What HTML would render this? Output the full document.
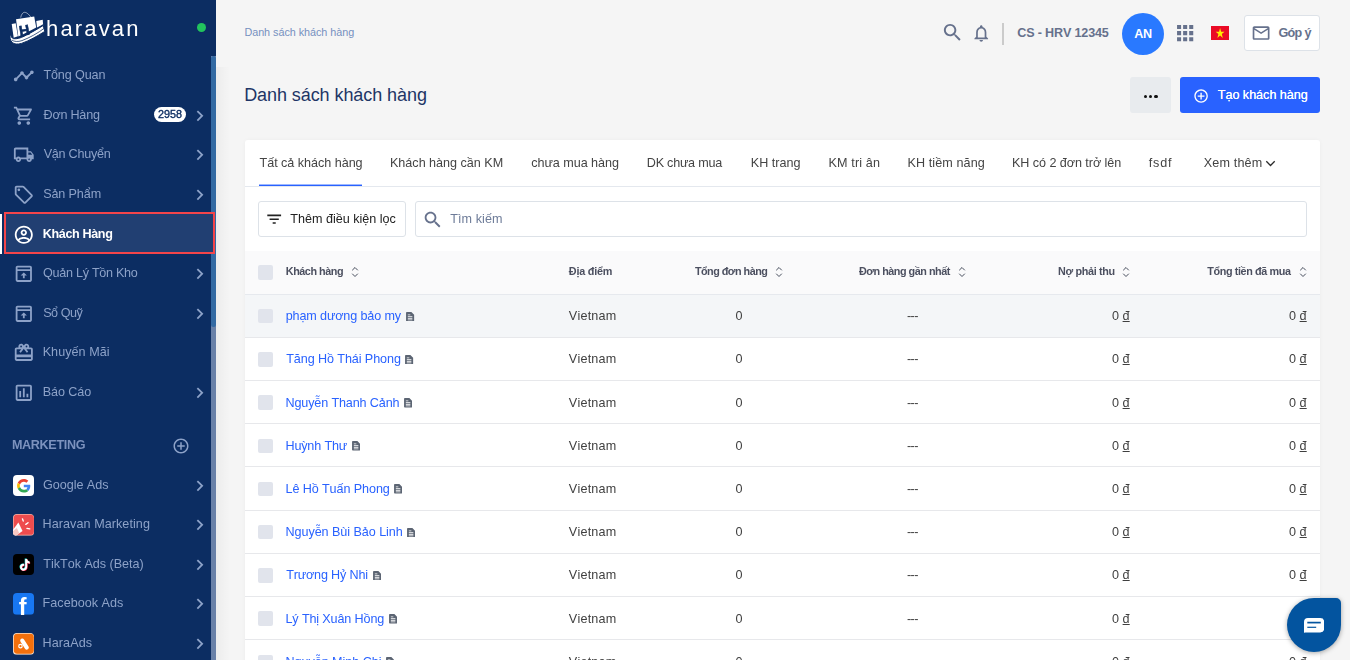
<!DOCTYPE html>
<html lang="vi">
<head>
<meta charset="utf-8">
<title>Danh sách khách hàng</title>
<style>
*{box-sizing:border-box;margin:0;padding:0}
html,body{width:1350px;height:660px;overflow:hidden;background:#f5f5f5;font-family:"Liberation Sans",sans-serif;color:#212121;font-size:12.6px;font-kerning:none}
body{position:relative}
.tx{white-space:nowrap;position:relative}
/* sidebar */
#side{position:absolute;left:0;top:0;width:216px;height:660px;background:#0c2d62;overflow:hidden;will-change:transform}
#side .track{position:absolute;left:211px;top:56px;width:5px;height:604px;background:#6981a8}
#side .thumb{position:absolute;left:211px;top:56px;width:5px;height:270.6px;background:#336aa3;border-radius:2.5px}
.mi{position:absolute;left:0;width:211px;height:39.6px;color:#8da2c8;font-size:12.6px;line-height:39.6px;white-space:nowrap}
.mi > .tx{position:absolute;left:43.6px;top:0}
.mi svg.ic{position:absolute;left:12.6px;top:9px;width:21.6px;height:21.6px;fill:#8da2c8}
.mi svg.ch{position:absolute;left:189.2px;top:9px;width:21.6px;height:21.6px;fill:#8da2c8}
.mi.act{color:#fff;font-weight:bold}
.mi.act svg.ic{fill:#fff}
#actbox{position:absolute;left:4px;top:211.9px;width:210.8px;height:42px;background:#213f72;border:2.9px solid #f4454a}
#actbar{position:absolute;left:0;top:213.9px;width:2px;height:40px;background:#fff}
.badge{position:absolute;left:153.8px;top:11.1px;width:32.4px;height:15.3px;border-radius:7.65px;background:#fff;color:#0c2d62;font-size:10.8px;font-weight:normal;-webkit-text-stroke:.35px #0c2d62;line-height:15.3px;text-align:center}
.app{position:absolute;left:12.8px;top:9px;width:21.6px;height:21.6px;border-radius:4px;overflow:hidden}
.app svg{display:block;width:21.6px;height:21.6px}
#mk{position:absolute;left:12.8px;top:435px;font-size:12.6px;line-height:20px;font-weight:bold;color:#7c92be}
#mkplus{position:absolute;left:171.5px;top:436.5px;width:18px;height:18px;fill:#8da2c8}
#logo{position:absolute;left:6px;top:8px;width:44px;height:40px}
#brand{position:absolute;left:46px;top:14px;font-size:22px;line-height:30px;color:#fff}
#dot{position:absolute;left:197px;top:22.8px;width:9.2px;height:9.2px;border-radius:50%;background:#22c35d}
/* top */
#sh{position:absolute;left:216px;top:66.6px;width:14px;height:594px;background:linear-gradient(to right,rgba(0,0,0,.035),rgba(0,0,0,0))}
#crumb{position:absolute;left:245px;top:22px;font-size:10.8px;color:#7590c0;line-height:20px}
#title{position:absolute;left:245px;top:80px;font-size:18px;color:#1e3566;line-height:30px}
.tb{position:absolute;fill:#66718c}
#sep{position:absolute;left:1002px;top:23px;width:2px;height:22px;background:#cbcbcb}
#shop{position:absolute;left:1017.8px;top:23px;font-size:12.6px;font-weight:bold;color:#66718c;line-height:20px}
#av{position:absolute;left:1122px;top:12.5px;width:42px;height:42px;border-radius:50%;background:#2979ff;color:#fff;font-weight:bold;font-size:12.6px;line-height:43px;text-align:center}
#flag{position:absolute;left:1210.8px;top:25.8px;width:18.2px;height:14.2px}
#gopy{position:absolute;left:1243.5px;top:15.2px;width:76px;height:35.4px;background:#fff;border:1px solid #dde2e8;border-radius:3px}
#gopy svg{position:absolute;left:6.3px;top:6.5px;width:20.2px;height:20.2px;fill:#66718c}
#gopy .tx{position:absolute;left:35px;top:0;line-height:35px;font-weight:bold;color:#66718c}
#more{position:absolute;left:1130px;top:77px;width:41px;height:35.8px;background:#e8ebee;border-radius:3px}
#more i{position:absolute;top:17.5px;width:3.2px;height:3.2px;border-radius:50%;background:#111}
#create{position:absolute;left:1180px;top:77px;width:140px;height:35.8px;background:#2962ff;border-radius:3px;color:#fff}
#create svg{position:absolute;left:13.4px;top:10.9px;width:16.2px;height:16.2px;fill:#fff}
#create .tx{position:absolute;left:38px;top:0;line-height:37.8px;text-shadow:0 0 .3px #fff}
/* card */
#card{position:absolute;left:245px;top:140px;width:1075px;height:540px;background:#fff;border-radius:3px;box-shadow:0 0 4px rgba(0,0,0,.04);will-change:transform}
#tabs{position:absolute;left:0;top:0;width:1075px;height:46.8px;border-bottom:1px solid #e4e8ee}
.tab{position:absolute;top:13px;line-height:20px;color:#444;font-size:12.6px}
#ul{position:absolute;left:14px;top:45px;width:103px;height:1px;background:#2962ff;box-shadow:0 -1px 0 rgba(41,98,255,.45)}
#fbtn{position:absolute;left:13px;top:61.2px;width:147.6px;height:35.4px;border:1px solid #dde2e8;border-radius:3px;background:#fff}
#fbtn svg{position:absolute;left:6px;top:7.7px;width:18.4px;height:18.4px;fill:#222}
#fbtn .tx{position:absolute;left:31.6px;top:0;line-height:35px;color:#222}
#sbox{position:absolute;left:170px;top:61.2px;width:892px;height:35.4px;border:1px solid #dde2e8;border-radius:3px;background:#fff}
#sbox svg{position:absolute;left:6.4px;top:7px;width:21.6px;height:21.6px;fill:#66718c}
#sbox .tx{position:absolute;left:34.6px;top:0;line-height:35px;color:#6d7b98}
#th{position:absolute;left:0;top:111.35px;width:1075px;height:43.2px;background:#fafafb;border-bottom:1px solid #e6e9ee;font-size:10.8px;font-weight:bold;color:#4c5060;line-height:40.6px}
.row{position:absolute;left:0;width:1075px;height:43.2px;border-bottom:1px solid #e7e8eb;line-height:43.8px;color:#3f3f3f;font-size:12.6px}
.row.hv{background:#f4f6f8}
.cb{position:absolute;left:13.3px;width:14.6px;height:14.4px;background:#e1e4ec;border-radius:2px}
.c{position:absolute;top:0;white-space:nowrap}
.row .c{top:.7px}
.nm{color:#2962ff}
.srt{position:absolute;width:8px;height:12px}
.doc{position:absolute;width:8.2px;height:9.6px;fill:#5c6573}
.u{text-decoration:underline}
#chat{position:absolute;left:1287px;top:597.6px;width:54px;height:54.6px;background:#03549f;border-radius:27px 5px 27px 27px;box-shadow:0 1px 5px rgba(0,0,0,.35)}
</style>
</head>
<body>

<div id="side">
<div class="track"></div><div class="thumb"></div>
<div id="actbox"></div><div id="actbar"></div>
<svg id="logo" viewBox="6 8 44 40">
<g fill="#fff">
<path d="M11.700 24 L15.700 23.200 L17.900 36.300 L13.700 37.800 Z"/>
<path d="M16 19.300 L34.200 16.500 L36.200 27.600 C30 31 24 34.200 18.300 36.400 Z"/>
<path d="M36.300 21 L42.700 19.800 L43.100 24.300 C41 25.600 39 26.600 37 27.500 Z"/>
<path stroke="#0c2d62" stroke-width="1" d="M10.300 33.800 C10.700 36.400 11.700 38 13.500 38.700 C17 39.100 20.500 38 24 36.300 C31 32.800 37.500 29 43.200 25.500 L44.800 31.400 C37 36.300 29 40.800 21.500 43.400 C17.500 44.500 14.300 44.300 12.300 42.500 C10.200 40.500 9.500 37 10.300 33.800 Z"/>
</g>
<path d="M20.700 17.600 C21.300 14.500 22.800 12.300 24.600 12.300 C26.800 12.300 29.800 15 31.600 18.600" fill="none" stroke="#fff" stroke-width=".55"/>
<text x="19.900" y="36" transform="rotate(-10 21 36)" font-family="Liberation Sans, sans-serif" font-weight="bold" font-size="14.500" fill="#0c2d62" stroke="#0c2d62" stroke-width=".500">H</text>
<path d="M11.800 40 C14 41.700 18 42 22 40.600 C30 37.600 38 33 44.200 28.300" fill="none" stroke="#0c2d62" stroke-width=".75"/>
</svg>
<div id="brand"><span id="t1" class="tx " style="letter-spacing:2.150px;">haravan</span></div>
<div id="dot"></div>
<div class="mi " style="top:56.20px">
<svg class="ic" viewBox="0 0 24 24"><path d="M23 8c0 1.1-.9 2-2 2-.18 0-.35-.02-.51-.07l-3.56 3.55c.05.16.07.34.07.52 0 1.1-.9 2-2 2s-2-.9-2-2c0-.18.02-.36.07-.52l-2.55-2.55c-.16.05-.34.07-.52.07s-.36-.02-.52-.07l-4.55 4.56c.05.16.07.33.07.51 0 1.1-.9 2-2 2s-2-.9-2-2 .9-2 2-2c.18 0 .35.02.51.07l4.56-4.55C8.02 9.36 8 9.18 8 9c0-1.1.9-2 2-2s2 .9 2 2c0 .18-.02.36-.07.52l2.55 2.55c.16-.05.34-.07.52-.07s.36.02.52.07l3.55-3.56C19.02 8.35 19 8.18 19 8c0-1.1.9-2 2-2s2 .9 2 2z"/></svg>
<span id="t2" class="tx " style="letter-spacing:-0.128px;left:43.43px;">Tổng Quan</span>
</div>
<div class="mi " style="top:95.80px">
<svg class="ic" viewBox="0 0 24 24"><path d="M15.55 13c.75 0 1.41-.41 1.75-1.03l3.58-6.49c.37-.66-.11-1.48-.87-1.48H5.21l-.94-2H1v2h2l3.6 7.59-1.35 2.44C4.52 15.37 5.48 17 7 17h12v-2H7l1.1-2h7.45zM6.16 6h12.15l-2.76 5H8.53L6.16 6zM7 18c-1.1 0-1.99.9-1.99 2S5.9 22 7 22s2-.9 2-2-.9-2-2-2zm10 0c-1.1 0-1.99.9-1.99 2s.89 2 1.99 2 2-.9 2-2-.9-2-2-2z"/></svg>
<span id="t3" class="tx " style="letter-spacing:-0.239px;left:43.62px;">Đơn Hàng</span>
<div class="badge"><span id="t4" class="tx " style="letter-spacing:0.050px;">2958</span></div>
<svg class="ch" viewBox="0 0 24 24"><path d="M8.59 16.59L13.17 12 8.59 7.41 10 6l6 6-6 6-1.410-1.410z"/></svg>
</div>
<div class="mi " style="top:135.40px">
<svg class="ic" viewBox="0 0 24 24"><path d="M20 8h-3V4H3c-1.1 0-2 .9-2 2v11h2c0 1.66 1.34 3 3 3s3-1.34 3-3h6c0 1.66 1.34 3 3 3s3-1.34 3-3h2v-5l-3-4zm-.5 1.5l1.96 2.5H17V9.5h2.5zM6 18c-.55 0-1-.45-1-1s.45-1 1-1 1 .45 1 1-.45 1-1 1zm2.22-3c-.55-.61-1.33-1-2.22-1s-1.67.39-2.22 1H3V6h12v9H8.22zM18 18c-.55 0-1-.45-1-1s.45-1 1-1 1 .45 1 1-.45 1-1 1z"/></svg>
<span id="t5" class="tx " style="letter-spacing:-0.250px;left:43.65px;">Vận Chuyển</span>
<svg class="ch" viewBox="0 0 24 24"><path d="M8.59 16.59L13.17 12 8.59 7.41 10 6l6 6-6 6-1.410-1.410z"/></svg>
</div>
<div class="mi " style="top:175.00px">
<svg class="ic" viewBox="0 0 24 24"><path d="M21.41 11.58l-9-9C12.05 2.22 11.55 2 11 2H4c-1.1 0-2 .9-2 2v7c0 .55.22 1.05.59 1.42l9 9c.36.36.86.58 1.41.58s1.05-.22 1.41-.59l7-7c.37-.36.59-.86.59-1.41s-.23-1.06-.59-1.42zM13 20.01L4 11V4h7v-.01l9 9-7 7.02z"/><circle cx="6.5" cy="6.5" r="1.5"/></svg>
<span id="t6" class="tx " style="letter-spacing:-0.115px;left:43.13px;">Sản Phẩm</span>
<svg class="ch" viewBox="0 0 24 24"><path d="M8.59 16.59L13.17 12 8.59 7.41 10 6l6 6-6 6-1.410-1.410z"/></svg>
</div>
<div class="mi act" style="top:214.60px">
<svg class="ic" viewBox="0 0 24 24"><path d="M12 2C6.48 2 2 6.48 2 12s4.48 10 10 10 10-4.48 10-10S17.520 2 12 2zM7.070 18.280c.43-.9 3.050-1.780 4.930-1.780s4.510.88 4.930 1.780C15.570 19.360 13.860 20 12 20s-3.570-.64-4.930-1.720zm11.290-1.450c-1.430-1.740-4.900-2.330-6.360-2.330s-4.930.59-6.360 2.330C4.620 15.490 4 13.820 4 12c0-4.410 3.590-8 8-8s8 3.590 8 8c0 1.820-.62 3.490-1.640 4.830zM12 6c-1.940 0-3.500 1.560-3.500 3.500S10.060 13 12 13s3.500-1.560 3.500-3.500S13.940 6 12 6zm0 5c-.83 0-1.500-.67-1.500-1.500S11.170 8 12 8s1.500.67 1.500 1.500S12.830 11 12 11z"/></svg>
<span id="t7" class="tx " style="letter-spacing:-0.388px;left:42.86px;">Khách Hàng</span>
</div>
<div class="mi " style="top:254.20px">
<svg class="ic" viewBox="0 0 24 24"><path d="M19 3H5c-1.100 0-2 .9-2 2v14c0 1.100.9 2 2 2h14c1.100 0 2-.9 2-2V5c0-1.100-.9-2-2-2zm0 16H5V9h14v10zM5 7V5h14v2H5z"/><path d="M12 10.500l-3.500 3.500h2.500v3h2v-3h2.500z"/></svg>
<span id="t8" class="tx " style="letter-spacing:-0.286px;left:43.10px;">Quản Lý Tồn Kho</span>
<svg class="ch" viewBox="0 0 24 24"><path d="M8.59 16.59L13.17 12 8.59 7.41 10 6l6 6-6 6-1.410-1.410z"/></svg>
</div>
<div class="mi " style="top:293.80px">
<svg class="ic" viewBox="0 0 24 24"><path d="M19 3H5c-1.100 0-2 .9-2 2v14c0 1.100.9 2 2 2h14c1.100 0 2-.9 2-2V5c0-1.100-.9-2-2-2zm0 16H5V9h14v10zM5 7V5h14v2H5z"/><path d="M12 10.500l-3.500 3.500h2.500v3h2v-3h2.500z"/></svg>
<span id="t9" class="tx " style="letter-spacing:-0.441px;left:43.13px;">Sổ Quỹ</span>
<svg class="ch" viewBox="0 0 24 24"><path d="M8.59 16.59L13.17 12 8.59 7.41 10 6l6 6-6 6-1.410-1.410z"/></svg>
</div>
<div class="mi " style="top:333.40px">
<svg class="ic" viewBox="0 0 24 24"><path d="M20 6h-2.180c.11-.31.180-.65.180-1 0-1.660-1.340-3-3-3-1.050 0-1.960.54-2.500 1.350l-.5.670-.5-.68C10.960 2.540 10.050 2 9 2 7.340 2 6 3.340 6 5c0 .35.070.69.180 1H4c-1.110 0-1.990.89-1.990 2L2 19c0 1.110.89 2 2 2h16c1.110 0 2-.89 2-2V8c0-1.110-.89-2-2-2zm-5-2c.55 0 1 .45 1 1s-.45 1-1 1-1-.45-1-1 .45-1 1-1zM9 4c.55 0 1 .45 1 1s-.45 1-1 1-1-.45-1-1 .45-1 1-1zm11 15H4v-2h16v2zm0-5H4V8h5.080L7 10.830 8.620 12 11 8.760l1-1.360 1 1.360L15.380 12 17 10.830 14.920 8H20v6z"/></svg>
<span id="t10" class="tx " style="letter-spacing:0.041px;left:42.68px;">Khuyến Mãi</span>
</div>
<div class="mi " style="top:373.00px">
<svg class="ic" viewBox="0 0 24 24"><path d="M19 3H5c-1.100 0-2 .9-2 2v14c0 1.100.9 2 2 2h14c1.100 0 2-.9 2-2V5c0-1.100-.9-2-2-2zm0 16H5V5h14v14zM7 10h2v7H7zm4-3h2v10h-2zm4 6h2v4h-2z"/></svg>
<span id="t11" class="tx " style="letter-spacing:-0.076px;left:42.68px;">Báo Cáo</span>
<svg class="ch" viewBox="0 0 24 24"><path d="M8.59 16.59L13.17 12 8.59 7.41 10 6l6 6-6 6-1.410-1.410z"/></svg>
</div>
<div id="mk"><span id="t12" class="tx " style="letter-spacing:-0.342px;left:-0.85px;">MARKETING</span></div>
<svg id="mkplus" viewBox="0 0 24 24"><path d="M13 7h-2v4H7v2h4v4h2v-4h4v-2h-4V7zm-1-5C6.480 2 2 6.480 2 12s4.480 10 10 10 10-4.480 10-10S17.520 2 12 2zm0 18c-4.410 0-8-3.590-8-8s3.590-8 8-8 8 3.590 8 8-3.590 8-8 8z"/></svg>
<div class="mi" style="top:465.60px">
<div class="app"><svg viewBox="0 0 24 24"><rect width="24" height="24" fill="#fff"/><g transform="translate(4.5 4.5) scale(0.3125)"><path fill="#EA4335" d="M24 9.500c3.540 0 6.710 1.220 9.210 3.600l6.850-6.850C35.900 2.380 30.470 0 24 0 14.620 0 6.510 5.380 2.560 13.220l7.980 6.190C12.430 13.720 17.740 9.500 24 9.500z"/><path fill="#4285F4" d="M46.980 24.550c0-1.570-.15-3.090-.38-4.550H24v9.020h12.940c-.58 2.960-2.260 5.480-4.780 7.180l7.730 6c4.510-4.180 7.090-10.360 7.090-17.650z"/><path fill="#FBBC05" d="M10.530 28.590c-.48-1.450-.76-2.990-.76-4.590s.27-3.140.76-4.590l-7.980-6.190C.92 16.460 0 20.120 0 24c0 3.880.92 7.540 2.560 10.780l7.970-6.190z"/><path fill="#34A853" d="M24 48c6.480 0 11.930-2.130 15.890-5.810l-7.730-6c-2.150 1.450-4.920 2.300-8.160 2.300-6.260 0-11.570-4.220-13.470-9.910l-7.980 6.190C6.510 42.620 14.620 48 24 48z"/></g></svg></div>
<span id="t13" class="tx " style="letter-spacing:-0.036px;left:42.97px;">Google Ads</span>
<svg class="ch" viewBox="0 0 24 24"><path d="M8.59 16.59L13.17 12 8.59 7.41 10 6l6 6-6 6-1.410-1.410z"/></svg>
</div>
<div class="mi" style="top:505.20px">
<div class="app"><svg viewBox="0 0 24 24"><rect width="24" height="24" fill="#f7b3a6"/><rect x=".8" y=".8" width="22.400" height="22.400" rx="3.800" fill="#ee4c4e"/><path d="M0 17.500 L6 9.500 L10.600 19 L3.500 24 L0 24 Z" fill="#fff"/><path d="M0 19 L4.300 15.500 L7 21.500 L3.500 24 L0 24 Z" fill="#f9c9c4"/><path d="M10.500 5.400 L11.400 7.800 M14.200 11.500 L16.700 9.700 M15.500 16 L18.600 16.600" stroke="#fff" stroke-width="1.500" stroke-linecap="round"/></svg></div>
<span id="t14" class="tx " style="letter-spacing:0.059px;left:42.57px;">Haravan Marketing</span>
<svg class="ch" viewBox="0 0 24 24"><path d="M8.59 16.59L13.17 12 8.59 7.41 10 6l6 6-6 6-1.410-1.410z"/></svg>
</div>
<div class="mi" style="top:544.80px">
<div class="app"><svg viewBox="0 0 24 24"><rect width="24" height="24" fill="#000"/><path d="M13.700 5.500h2.100c.1 1.600 1.100 2.700 2.700 2.900v2.100c-1 0-1.900-.3-2.700-.8v4.600c0 2.400-1.800 4.200-4.100 4.200-2.200 0-3.900-1.700-3.900-3.800 0-2.300 2-4.100 4.500-3.700v2.200c-1.200-.3-2.300.4-2.300 1.500 0 .9.800 1.600 1.700 1.600 1.100 0 1.900-.7 1.900-2V5.500z" fill="#25f4ee" transform="translate(-.6 -.5)"/><path d="M13.700 5.500h2.100c.1 1.600 1.100 2.700 2.700 2.900v2.100c-1 0-1.900-.3-2.700-.8v4.600c0 2.400-1.800 4.200-4.100 4.200-2.200 0-3.900-1.700-3.900-3.800 0-2.300 2-4.100 4.500-3.700v2.200c-1.200-.3-2.300.4-2.300 1.500 0 .9.800 1.600 1.700 1.600 1.100 0 1.900-.7 1.900-2V5.500z" fill="#fe2c55" transform="translate(.5 .5)"/><path d="M13.700 5.500h2.100c.1 1.600 1.100 2.700 2.700 2.900v2.100c-1 0-1.900-.3-2.700-.8v4.600c0 2.400-1.800 4.200-4.100 4.200-2.200 0-3.900-1.700-3.900-3.800 0-2.300 2-4.100 4.500-3.700v2.200c-1.200-.3-2.300.4-2.300 1.500 0 .9.800 1.600 1.700 1.600 1.100 0 1.900-.7 1.900-2V5.500z" fill="#fff"/></svg></div>
<span id="t15" class="tx " style="letter-spacing:-0.026px;left:43.32px;">TikTok Ads (Beta)</span>
<svg class="ch" viewBox="0 0 24 24"><path d="M8.59 16.59L13.17 12 8.59 7.41 10 6l6 6-6 6-1.410-1.410z"/></svg>
</div>
<div class="mi" style="top:584.40px">
<div class="app"><svg viewBox="0 0 24 24"><rect width="24" height="24" fill="#1877f2"/><text x="6.300" y="24" font-family="Liberation Sans, sans-serif" font-weight="bold" font-size="26" fill="#fff">f</text></svg></div>
<span id="t16" class="tx " style="letter-spacing:0.025px;left:42.57px;">Facebook Ads</span>
<svg class="ch" viewBox="0 0 24 24"><path d="M8.59 16.59L13.17 12 8.59 7.41 10 6l6 6-6 6-1.410-1.410z"/></svg>
</div>
<div class="mi" style="top:624.00px">
<div class="app"><svg viewBox="0 0 24 24"><rect width="24" height="24" fill="#fde3cd"/><rect x=".9" y=".9" width="22.200" height="22.200" rx="3.800" fill="#f4700c"/><path d="M10.300 8.400 L15.300 16.200" stroke="#fff" stroke-width="4.600" stroke-linecap="round"/><circle cx="8.300" cy="14.600" r="1.900" fill="#f4700c" stroke="#fff" stroke-width="1.300"/></svg></div>
<span id="t17" class="tx " style="letter-spacing:0.080px;left:42.57px;">HaraAds</span>
<svg class="ch" viewBox="0 0 24 24"><path d="M8.59 16.59L13.17 12 8.59 7.41 10 6l6 6-6 6-1.410-1.410z"/></svg>
</div>
</div>
<div id="sh"></div>
<div id="crumb"><span id="t18" class="tx " style="letter-spacing:-0.035px;left:-0.59px;">Danh sách khách hàng</span></div>
<div id="title"><span id="t19" class="tx " style="letter-spacing:-0.069px;left:-0.88px;">Danh sách khách hàng</span></div>
<svg class="tb" style="left:941.1px;top:21.4px;width:23px;height:23px" viewBox="0 0 24 24"><path d="M15.500 14h-.79l-.28-.27C15.410 12.590 16 11.110 16 9.500 16 5.910 13.090 3 9.500 3S3 5.910 3 9.500 5.910 16 9.500 16c1.610 0 3.090-.59 4.230-1.570l.27.28v.79l5 4.990L20.490 19l-4.990-5zm-6 0C7.010 14 5 11.990 5 9.500S7.010 5 9.500 5 14 7.010 14 9.500 11.990 14 9.500 14z"/></svg>
<svg class="tb" style="left:970.6px;top:22.6px;width:20.5px;height:20.5px" viewBox="0 0 24 24"><path d="M12 22c1.100 0 2-.9 2-2h-4c0 1.100.9 2 2 2zm6-6v-5c0-3.070-1.630-5.640-4.500-6.320V4c0-.83-.67-1.500-1.500-1.500s-1.500.67-1.500 1.500v.68C7.640 5.360 6 7.920 6 11v5l-2 2v1h16v-1l-2-2zm-2 1H8v-6c0-2.480 1.510-4.500 4-4.500s4 2.020 4 4.500v6z"/></svg>
<div id="sep"></div>
<div id="shop"><span id="t20" class="tx " style="letter-spacing:-0.172px;left:-0.52px;">CS - HRV 12345</span></div>
<div id="av"><span id="t21" class="tx " style="letter-spacing:-0.450px;">AN</span></div>
<svg class="tb" style="left:1172.8px;top:20.9px;width:24.3px;height:24.3px" viewBox="0 0 24 24"><path d="M4 8h4V4H4v4zm6 12h4v-4h-4v4zm-6 0h4v-4H4v4zm0-6h4v-4H4v4zm6 0h4v-4h-4v4zm6-10v4h4V4h-4zm-6 4h4V4h-4v4zm6 6h4v-4h-4v4zm0 6h4v-4h-4v4z"/></svg>
<svg id="flag" viewBox="0 0 30 20" preserveAspectRatio="none"><rect width="30" height="20" fill="#ea0a25"/><polygon fill="#ffeb00" transform="translate(15 10.300) scale(1.280) translate(-15 -10.300)" points="15,4.500 16.350,8.650 20.700,8.650 17.180,11.200 18.530,15.350 15,12.800 11.470,15.350 12.820,11.200 9.300,8.650 13.650,8.650"/></svg>
<div id="gopy"><svg viewBox="0 0 24 24"><path d="M20 4H4c-1.100 0-1.990.9-1.990 2L2 18c0 1.100.9 2 2 2h16c1.100 0 2-.9 2-2V6c0-1.100-.9-2-2-2zm0 14H4V8l8 5 8-5v10zm-8-7L4 6h16l-8 5z"/></svg><span id="t22" class="tx " style="letter-spacing:-0.676px;left:33.99px;">Góp ý</span></div>
<div id="more"><i style="left:13.6px"></i><i style="left:19px"></i><i style="left:24.400px"></i></div>
<div id="create"><svg viewBox="0 0 24 24"><path d="M13 7h-2v4H7v2h4v4h2v-4h4v-2h-4V7zm-1-5C6.480 2 2 6.480 2 12s4.480 10 10 10 10-4.480 10-10S17.520 2 12 2zm0 18c-4.410 0-8-3.590-8-8s3.590-8 8-8 8 3.590 8 8-3.590 8-8 8z"/></svg><span id="t23" class="tx " style="letter-spacing:-0.018px;left:37.72px;">Tạo khách hàng</span></div>
<div id="card">
<div id="tabs">
<div class="tab" style="left:14.8px"><span id="t24" class="tx " style="letter-spacing:-0.033px;left:-0.29px;">Tất cả khách hàng</span></div>
<div class="tab" style="left:146.0px"><span id="t25" class="tx " style="letter-spacing:-0.010px;left:-1.04px;">Khách hàng cần KM</span></div>
<div class="tab" style="left:286.8px"><span id="t26" class="tx " style="letter-spacing:-0.042px;left:-0.54px;">chưa mua hàng</span></div>
<div class="tab" style="left:402.8px"><span id="t27" class="tx " style="letter-spacing:-0.230px;left:-1.04px;">DK chưa mua</span></div>
<div class="tab" style="left:506.8px"><span id="t28" class="tx " style="letter-spacing:0.021px;left:-1.04px;">KH trang</span></div>
<div class="tab" style="left:584.4px"><span id="t29" class="tx " style="letter-spacing:0.157px;left:-1.03px;">KM tri ân</span></div>
<div class="tab" style="left:663.4px"><span id="t30" class="tx " style="letter-spacing:0.103px;left:-1.03px;">KH tiềm năng</span></div>
<div class="tab" style="left:768.0px"><span id="t31" class="tx " style="letter-spacing:-0.060px;left:-1.04px;">KH có 2 đơn trở lên</span></div>
<div class="tab" style="left:904.0px"><span id="t32" class="tx " style="letter-spacing:0.783px;left:-0.19px;">fsdf</span></div>
<div class="tab" style="left:959.0px"><span id="t33" class="tx " style="letter-spacing:0.160px;left:-0.29px;">Xem thêm</span></div>
<svg style="position:absolute;left:1020px;top:20px;width:11px;height:7px" viewBox="0 0 11 7"><path d="M1.300 1.300 L5.500 5.500 L9.700 1.300" fill="none" stroke="#2a2a2a" stroke-width="1.300"/></svg>
<div id="ul"></div>
</div>
<div id="fbtn"><svg viewBox="0 0 24 24"><path d="M10 18h4v-2h-4v2zM3 6v2h18V6H3zm3 7h12v-2H6v2z"/></svg><span id="t34" class="tx " style="letter-spacing:-0.006px;left:31.22px;">Thêm điều kiện lọc</span></div>
<div id="sbox"><svg viewBox="0 0 24 24"><path d="M15.500 14h-.79l-.28-.27C15.410 12.590 16 11.110 16 9.500 16 5.910 13.090 3 9.500 3S3 5.910 3 9.500 5.910 16 9.500 16c1.610 0 3.090-.59 4.230-1.570l.27.28v.79l5 4.990L20.490 19l-4.990-5zm-6 0C7.010 14 5 11.990 5 9.500S7.010 5 9.500 5 14 7.010 14 9.500 11.990 14 9.500 14z"/></svg><span id="t35" class="tx " style="letter-spacing:0.091px;left:34.13px;">Tìm kiếm</span></div>
<div id="th">
<div class="cb" style="top:13.8px"></div>
<div class="c" style="left:41.500px"><span id="t36" class="tx " style="letter-spacing:-0.450px;left:-0.72px;">Khách hàng</span></div><svg class="srt" style="left:106.2px;top:14.750px" viewBox="0 0 8 12"><path d="M1.200 4.300 L4 1.500 L6.800 4.300 M1.200 7.700 L4 10.500 L6.800 7.700" fill="none" stroke="#3d4454" stroke-width=".950"/></svg>
<div class="c" style="left:323.900px"><span id="t37" class="tx " style="letter-spacing:-0.200px;left:-0.04px;">Địa điểm</span></div>
<div class="c" style="left:450px"><span id="t38" class="tx " style="letter-spacing:-0.500px;left:-0.13px;">Tổng đơn hàng</span></div><svg class="srt" style="left:530.0px;top:14.750px" viewBox="0 0 8 12"><path d="M1.200 4.300 L4 1.500 L6.800 4.300 M1.200 7.700 L4 10.500 L6.800 7.700" fill="none" stroke="#3d4454" stroke-width=".950"/></svg>
<div class="c" style="left:614px"><span id="t39" class="tx " style="letter-spacing:-0.467px;left:-0.05px;">Đơn hàng gần nhất</span></div><svg class="srt" style="left:713.0px;top:14.750px" viewBox="0 0 8 12"><path d="M1.200 4.300 L4 1.500 L6.800 4.300 M1.200 7.700 L4 10.500 L6.800 7.700" fill="none" stroke="#3d4454" stroke-width=".950"/></svg>
<div class="c" style="left:813.700px"><span id="t40" class="tx " style="letter-spacing:-0.322px;left:-0.72px;">Nợ phải thu</span></div><svg class="srt" style="left:877.0px;top:14.750px" viewBox="0 0 8 12"><path d="M1.200 4.300 L4 1.500 L6.800 4.300 M1.200 7.700 L4 10.500 L6.800 7.700" fill="none" stroke="#3d4454" stroke-width=".950"/></svg>
<div class="c" style="left:962.400px"><span id="t41" class="tx " style="letter-spacing:-0.382px;left:-0.11px;">Tổng tiền đã mua</span></div><svg class="srt" style="left:1054.2px;top:14.750px" viewBox="0 0 8 12"><path d="M1.200 4.300 L4 1.500 L6.800 4.300 M1.200 7.700 L4 10.500 L6.800 7.700" fill="none" stroke="#3d4454" stroke-width=".950"/></svg>
</div>
<div class="row hv" style="top:154.55px">
<div class="cb" style="top:14.5px"></div>
<div class="c nm" style="left:41.500px"><span id="t42" class="tx " style="letter-spacing:-0.129px;left:-0.83px;">phạm dương bảo my</span></div><svg class="doc" style="left:161.4px;top:17.1px" viewBox="0 0 16 19"><path d="M1.500 0 H10.500 L16 5.500 V17.500 Q16 19 14.500 19 H1.500 Q0 19 0 17.500 V1.500 Q0 0 1.500 0 Z M3.500 8.200 V10 H12.500 V8.200 Z M3.500 11.600 V13.400 H12.500 V11.600 Z M3.500 4.800 V6.600 H8.500 V4.800 Z M3.500 14.800 V16.400 H12.500 V14.800 Z" fill-rule="evenodd"/></svg>
<div class="c" style="left:323.900px"><span id="t43" class="tx " style="letter-spacing:0.195px;left:-0.05px;">Vietnam</span></div>
<div class="c" style="left:490.500px"><span id="t44" class="tx " style="letter-spacing:0.000px;">0</span></div>
<div class="c" style="left:661.9px"><span id="t45" class="tx " style="letter-spacing:-0.550px;">---</span></div>
<div class="c" style="right:190.3px"><span id="t46" class="tx " style="letter-spacing:0.100px;">0 <span class="u">đ</span></span></div>
<div class="c" style="right:13.3px"><span id="t47" class="tx " style="letter-spacing:0.100px;">0 <span class="u">đ</span></span></div>
</div>
<div class="row " style="top:197.75px">
<div class="cb" style="top:14.5px"></div>
<div class="c nm" style="left:41.500px"><span id="t48" class="tx " style="letter-spacing:-0.090px;left:-0.29px;">Tăng Hồ Thái Phong</span></div><svg class="doc" style="left:160.4px;top:17.1px" viewBox="0 0 16 19"><path d="M1.500 0 H10.500 L16 5.500 V17.500 Q16 19 14.500 19 H1.500 Q0 19 0 17.500 V1.500 Q0 0 1.500 0 Z M3.500 8.200 V10 H12.500 V8.200 Z M3.500 11.600 V13.400 H12.500 V11.600 Z M3.500 4.800 V6.600 H8.500 V4.800 Z M3.500 14.800 V16.400 H12.500 V14.800 Z" fill-rule="evenodd"/></svg>
<div class="c" style="left:323.900px"><span id="t49" class="tx " style="letter-spacing:0.195px;left:-0.05px;">Vietnam</span></div>
<div class="c" style="left:490.500px"><span id="t50" class="tx " style="letter-spacing:0.000px;">0</span></div>
<div class="c" style="left:661.9px"><span id="t51" class="tx " style="letter-spacing:-0.550px;">---</span></div>
<div class="c" style="right:190.3px"><span id="t52" class="tx " style="letter-spacing:0.100px;">0 <span class="u">đ</span></span></div>
<div class="c" style="right:13.3px"><span id="t53" class="tx " style="letter-spacing:0.100px;">0 <span class="u">đ</span></span></div>
</div>
<div class="row " style="top:240.95px">
<div class="cb" style="top:14.5px"></div>
<div class="c nm" style="left:41.500px"><span id="t54" class="tx " style="letter-spacing:-0.136px;left:-1.04px;">Nguyễn Thanh Cảnh</span></div><svg class="doc" style="left:159.0px;top:17.1px" viewBox="0 0 16 19"><path d="M1.500 0 H10.500 L16 5.500 V17.500 Q16 19 14.500 19 H1.500 Q0 19 0 17.500 V1.500 Q0 0 1.500 0 Z M3.500 8.200 V10 H12.500 V8.200 Z M3.500 11.600 V13.400 H12.500 V11.600 Z M3.500 4.800 V6.600 H8.500 V4.800 Z M3.500 14.800 V16.400 H12.500 V14.800 Z" fill-rule="evenodd"/></svg>
<div class="c" style="left:323.900px"><span id="t55" class="tx " style="letter-spacing:0.195px;left:-0.05px;">Vietnam</span></div>
<div class="c" style="left:490.500px"><span id="t56" class="tx " style="letter-spacing:0.000px;">0</span></div>
<div class="c" style="left:661.9px"><span id="t57" class="tx " style="letter-spacing:-0.550px;">---</span></div>
<div class="c" style="right:190.3px"><span id="t58" class="tx " style="letter-spacing:0.100px;">0 <span class="u">đ</span></span></div>
<div class="c" style="right:13.3px"><span id="t59" class="tx " style="letter-spacing:0.100px;">0 <span class="u">đ</span></span></div>
</div>
<div class="row " style="top:284.15px">
<div class="cb" style="top:14.5px"></div>
<div class="c nm" style="left:41.500px"><span id="t60" class="tx " style="letter-spacing:-0.165px;left:-1.04px;">Huỳnh Thư</span></div><svg class="doc" style="left:107.1px;top:17.1px" viewBox="0 0 16 19"><path d="M1.500 0 H10.500 L16 5.500 V17.500 Q16 19 14.500 19 H1.500 Q0 19 0 17.500 V1.500 Q0 0 1.500 0 Z M3.500 8.200 V10 H12.500 V8.200 Z M3.500 11.600 V13.400 H12.500 V11.600 Z M3.500 4.800 V6.600 H8.500 V4.800 Z M3.500 14.800 V16.400 H12.500 V14.800 Z" fill-rule="evenodd"/></svg>
<div class="c" style="left:323.900px"><span id="t61" class="tx " style="letter-spacing:0.195px;left:-0.05px;">Vietnam</span></div>
<div class="c" style="left:490.500px"><span id="t62" class="tx " style="letter-spacing:0.000px;">0</span></div>
<div class="c" style="left:661.9px"><span id="t63" class="tx " style="letter-spacing:-0.550px;">---</span></div>
<div class="c" style="right:190.3px"><span id="t64" class="tx " style="letter-spacing:0.100px;">0 <span class="u">đ</span></span></div>
<div class="c" style="right:13.3px"><span id="t65" class="tx " style="letter-spacing:0.100px;">0 <span class="u">đ</span></span></div>
</div>
<div class="row " style="top:327.35px">
<div class="cb" style="top:14.5px"></div>
<div class="c nm" style="left:41.500px"><span id="t66" class="tx " style="letter-spacing:-0.093px;left:-1.04px;">Lê Hồ Tuấn Phong</span></div><svg class="doc" style="left:149.3px;top:17.1px" viewBox="0 0 16 19"><path d="M1.500 0 H10.500 L16 5.500 V17.500 Q16 19 14.500 19 H1.500 Q0 19 0 17.500 V1.500 Q0 0 1.500 0 Z M3.500 8.200 V10 H12.500 V8.200 Z M3.500 11.600 V13.400 H12.500 V11.600 Z M3.500 4.800 V6.600 H8.500 V4.800 Z M3.500 14.800 V16.400 H12.500 V14.800 Z" fill-rule="evenodd"/></svg>
<div class="c" style="left:323.900px"><span id="t67" class="tx " style="letter-spacing:0.195px;left:-0.05px;">Vietnam</span></div>
<div class="c" style="left:490.500px"><span id="t68" class="tx " style="letter-spacing:0.000px;">0</span></div>
<div class="c" style="left:661.9px"><span id="t69" class="tx " style="letter-spacing:-0.550px;">---</span></div>
<div class="c" style="right:190.3px"><span id="t70" class="tx " style="letter-spacing:0.100px;">0 <span class="u">đ</span></span></div>
<div class="c" style="right:13.3px"><span id="t71" class="tx " style="letter-spacing:0.100px;">0 <span class="u">đ</span></span></div>
</div>
<div class="row " style="top:370.55px">
<div class="cb" style="top:14.5px"></div>
<div class="c nm" style="left:41.500px"><span id="t72" class="tx " style="letter-spacing:-0.055px;left:-1.04px;">Nguyễn Bùi Bảo Linh</span></div><svg class="doc" style="left:162.3px;top:17.1px" viewBox="0 0 16 19"><path d="M1.500 0 H10.500 L16 5.500 V17.500 Q16 19 14.500 19 H1.500 Q0 19 0 17.500 V1.500 Q0 0 1.500 0 Z M3.500 8.200 V10 H12.500 V8.200 Z M3.500 11.600 V13.400 H12.500 V11.600 Z M3.500 4.800 V6.600 H8.500 V4.800 Z M3.500 14.800 V16.400 H12.500 V14.800 Z" fill-rule="evenodd"/></svg>
<div class="c" style="left:323.900px"><span id="t73" class="tx " style="letter-spacing:0.195px;left:-0.05px;">Vietnam</span></div>
<div class="c" style="left:490.500px"><span id="t74" class="tx " style="letter-spacing:0.000px;">0</span></div>
<div class="c" style="left:661.9px"><span id="t75" class="tx " style="letter-spacing:-0.550px;">---</span></div>
<div class="c" style="right:190.3px"><span id="t76" class="tx " style="letter-spacing:0.100px;">0 <span class="u">đ</span></span></div>
<div class="c" style="right:13.3px"><span id="t77" class="tx " style="letter-spacing:0.100px;">0 <span class="u">đ</span></span></div>
</div>
<div class="row " style="top:413.75px">
<div class="cb" style="top:14.5px"></div>
<div class="c nm" style="left:41.500px"><span id="t78" class="tx " style="letter-spacing:-0.171px;left:-0.29px;">Trương Hỷ Nhi</span></div><svg class="doc" style="left:127.5px;top:17.1px" viewBox="0 0 16 19"><path d="M1.500 0 H10.500 L16 5.500 V17.500 Q16 19 14.500 19 H1.500 Q0 19 0 17.500 V1.500 Q0 0 1.500 0 Z M3.500 8.200 V10 H12.500 V8.200 Z M3.500 11.600 V13.400 H12.500 V11.600 Z M3.500 4.800 V6.600 H8.500 V4.800 Z M3.500 14.800 V16.400 H12.500 V14.800 Z" fill-rule="evenodd"/></svg>
<div class="c" style="left:323.900px"><span id="t79" class="tx " style="letter-spacing:0.195px;left:-0.05px;">Vietnam</span></div>
<div class="c" style="left:490.500px"><span id="t80" class="tx " style="letter-spacing:0.000px;">0</span></div>
<div class="c" style="left:661.9px"><span id="t81" class="tx " style="letter-spacing:-0.550px;">---</span></div>
<div class="c" style="right:190.3px"><span id="t82" class="tx " style="letter-spacing:0.100px;">0 <span class="u">đ</span></span></div>
<div class="c" style="right:13.3px"><span id="t83" class="tx " style="letter-spacing:0.100px;">0 <span class="u">đ</span></span></div>
</div>
<div class="row " style="top:456.95px">
<div class="cb" style="top:14.5px"></div>
<div class="c nm" style="left:41.500px"><span id="t84" class="tx " style="letter-spacing:-0.131px;left:-1.04px;">Lý Thị Xuân Hồng</span></div><svg class="doc" style="left:143.8px;top:17.1px" viewBox="0 0 16 19"><path d="M1.500 0 H10.500 L16 5.500 V17.500 Q16 19 14.500 19 H1.500 Q0 19 0 17.500 V1.500 Q0 0 1.500 0 Z M3.500 8.200 V10 H12.500 V8.200 Z M3.500 11.600 V13.400 H12.500 V11.600 Z M3.500 4.800 V6.600 H8.500 V4.800 Z M3.500 14.800 V16.400 H12.500 V14.800 Z" fill-rule="evenodd"/></svg>
<div class="c" style="left:323.900px"><span id="t85" class="tx " style="letter-spacing:0.195px;left:-0.05px;">Vietnam</span></div>
<div class="c" style="left:490.500px"><span id="t86" class="tx " style="letter-spacing:0.000px;">0</span></div>
<div class="c" style="left:661.9px"><span id="t87" class="tx " style="letter-spacing:-0.550px;">---</span></div>
<div class="c" style="right:190.3px"><span id="t88" class="tx " style="letter-spacing:0.100px;">0 <span class="u">đ</span></span></div>
<div class="c" style="right:13.3px"><span id="t89" class="tx " style="letter-spacing:0.100px;">0 <span class="u">đ</span></span></div>
</div>
<div class="row " style="top:500.15px">
<div class="cb" style="top:14.5px"></div>
<div class="c nm" style="left:41.500px"><span id="t90" class="tx " style="letter-spacing:-0.037px;left:-1.04px;">Nguyễn Minh Chi</span></div><svg class="doc" style="left:141.0px;top:17.1px" viewBox="0 0 16 19"><path d="M1.500 0 H10.500 L16 5.500 V17.500 Q16 19 14.500 19 H1.500 Q0 19 0 17.500 V1.500 Q0 0 1.500 0 Z M3.500 8.200 V10 H12.500 V8.200 Z M3.500 11.600 V13.400 H12.500 V11.600 Z M3.500 4.800 V6.600 H8.500 V4.800 Z M3.500 14.800 V16.400 H12.500 V14.800 Z" fill-rule="evenodd"/></svg>
<div class="c" style="left:323.900px"><span id="t91" class="tx " style="letter-spacing:0.195px;left:-0.05px;">Vietnam</span></div>
<div class="c" style="left:490.500px"><span id="t92" class="tx " style="letter-spacing:0.000px;">0</span></div>
<div class="c" style="left:661.9px"><span id="t93" class="tx " style="letter-spacing:-0.550px;">---</span></div>
<div class="c" style="right:190.3px"><span id="t94" class="tx " style="letter-spacing:0.100px;">0 <span class="u">đ</span></span></div>
<div class="c" style="right:13.3px"><span id="t95" class="tx " style="letter-spacing:0.100px;">0 <span class="u">đ</span></span></div>
</div>
</div>
<div id="chat"><svg style="position:absolute;left:16.700px;top:20.300px;width:20.200px;height:14.800px" viewBox="0 0 20.200 14.800"><path d="M4 0 H16.200 Q20.200 0 20.200 4 V10.500 Q20.200 14.500 16.200 14.500 H1.500 L0 14.800 V4 Q0 0 4 0 Z" fill="#fff"/><path d="M3.300 4.600 H16.800" stroke="#03549f" stroke-width="1.700" fill="none"/><path d="M3.300 9.300 H12.200" stroke="#03549f" stroke-width="1.200" fill="none"/></svg></div>
</body></html>
